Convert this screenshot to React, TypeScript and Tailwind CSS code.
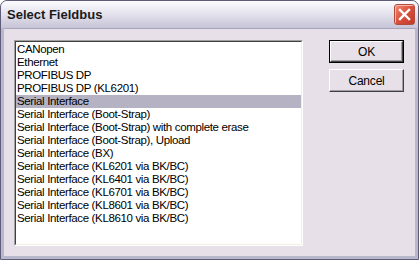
const items = [
  'CANopen',
  'Ethernet',
  'PROFIBUS DP',
  'PROFIBUS DP (KL6201)',
  'Serial Interface',
  'Serial Interface (Boot-Strap)',
  'Serial Interface (Boot-Strap) with complete erase',
  'Serial Interface (Boot-Strap), Upload',
  'Serial Interface (BX)',
  'Serial Interface (KL6201 via BK/BC)',
  'Serial Interface (KL6401 via BK/BC)',
  'Serial Interface (KL6701 via BK/BC)',
  'Serial Interface (KL8601 via BK/BC)',
  'Serial Interface (KL8610 via BK/BC)',
];

const selected = 4;

function CloseButton() {
  return (
    <div className="flex h-[21px] w-[21px] items-center justify-center rounded-[3px] border border-[#b5493a] bg-gradient-to-br from-[#f08a74] via-[#d9503b] to-[#c0392b] shadow-[inset_1px_1px_0_#f7b8a8]">
      <svg width="13" height="13" viewBox="0 0 13 13">
        <path d="M2 2 L11 11 M11 2 L2 11" stroke="#ffffff" strokeWidth="2.4" strokeLinecap="square" />
      </svg>
    </div>
  );
}

function Button({ label, isDefault }: { label: string; isDefault?: boolean }) {
  return (
    <div className={`h-[23px] w-[75px] ${isDefault ? 'border border-black' : ''}`}>
      <div className="flex h-full w-full items-center justify-center border-t border-l border-t-white border-l-white border-r border-b border-r-[#404040] border-b-[#404040] bg-[#e8e0e8] text-[12px] tracking-[-0.2px] text-black shadow-[inset_-1px_-1px_0_#a09ca8]">
        {label}
      </div>
    </div>
  );
}

export default function App() {
  return (
    <div className="h-[260px] w-[419px] font-['Liberation_Sans',Arial,sans-serif]">
      <div className="flex h-full w-full flex-col overflow-hidden rounded-t-[7px] border border-[#5e5c78] bg-[#b9b7cb]">
        <div className="flex h-[27px] shrink-0 items-center justify-between bg-gradient-to-b from-[#fcfcfe] via-[#e3e1ec] to-[#c6c4d6] pl-[6px] pr-[3px]">
          <span className="text-[13px] font-bold text-[#1a1a1a]">Select Fieldbus</span>
          <CloseButton />
        </div>
        <div className="mx-[3px] mb-[3px] flex flex-1 gap-[26px] border-t border-[#a7a5bc] bg-[#e8e0e8] pt-[11px] pl-[10px]">
          <div className="h-[206px] w-[289px] border-t border-l border-t-[#a0a0a0] border-l-[#a0a0a0] border-r border-b border-r-white border-b-white">
            <div className="h-full w-full border-t border-l border-t-[#404040] border-l-[#404040] border-r border-b border-r-[#f1efe2] border-b-[#f1efe2] bg-white pt-px">
              {items.map((item, i) => (
                <div
                  key={item}
                  className={`h-[13px] pl-[1px] text-[11.5px] leading-[13px] tracking-[-0.35px] whitespace-nowrap text-black ${i === selected ? 'bg-[#b5b2c4]' : ''}`}
                >
                  {item}
                </div>
              ))}
            </div>
          </div>
          <div className="flex flex-col gap-[6px]">
            <Button label="OK" isDefault />
            <Button label="Cancel" />
          </div>
        </div>
      </div>
    </div>
  );
}
